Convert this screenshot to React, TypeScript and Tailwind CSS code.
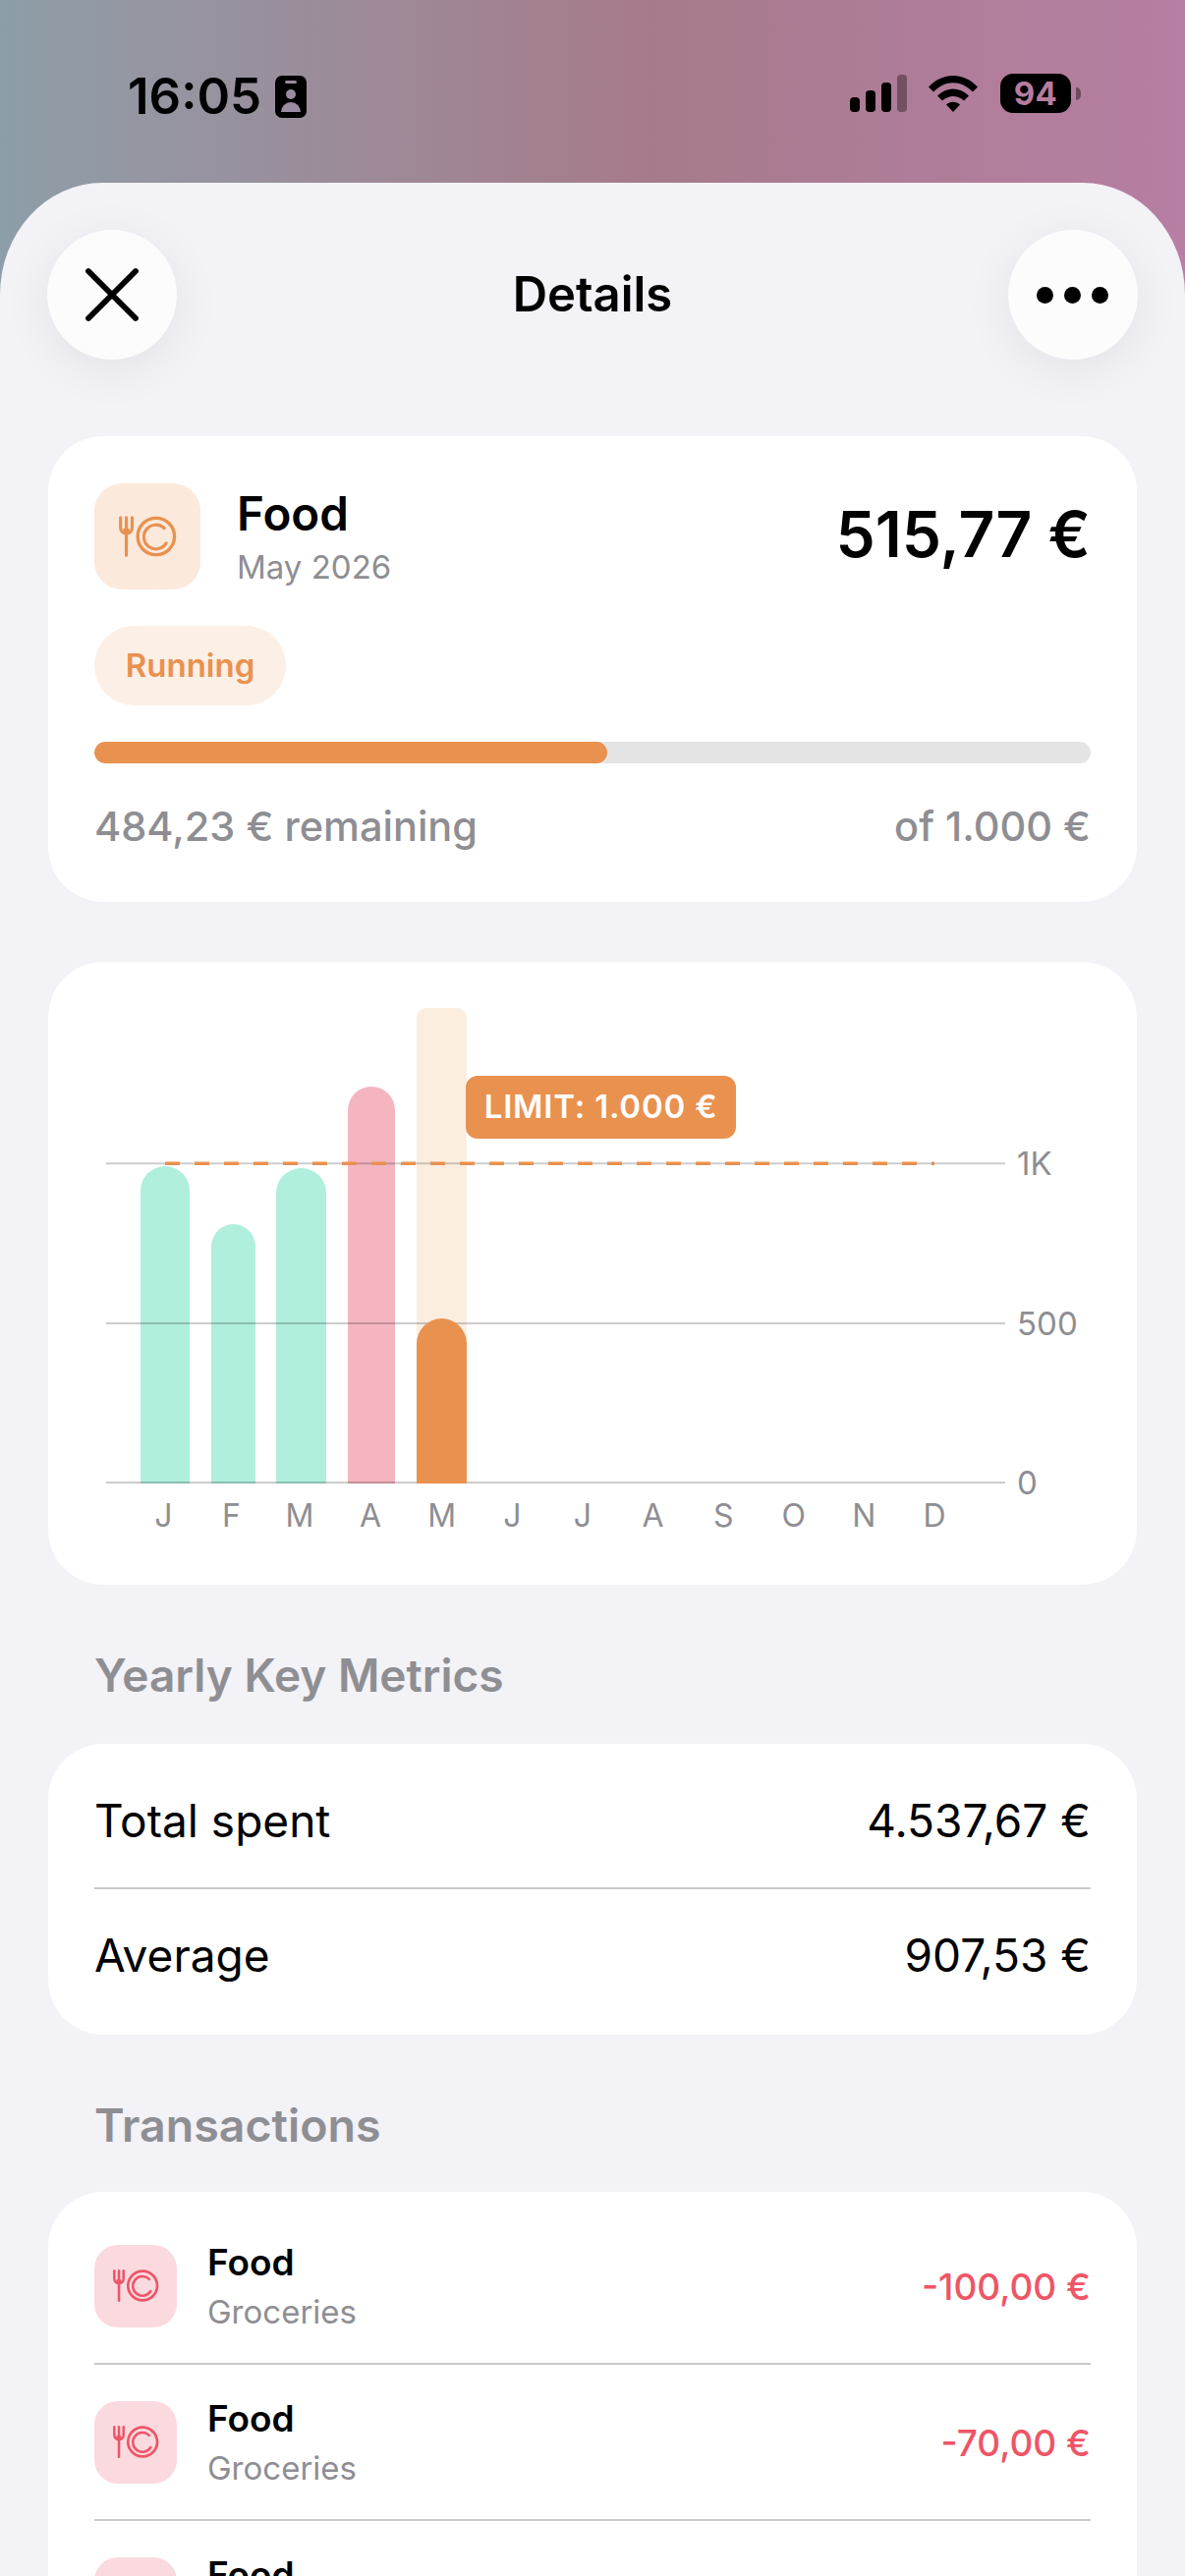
import React from 'react';
import { X } from 'lucide-react';

const FoodIcon = ({ className }: { className: string }) => (
  <svg viewBox="0 0 60 42" fill="none" stroke="currentColor" strokeLinecap="round" className={className}>
    <path d="M1.7 1.500V12a6 6 0 0 0 12 0V1.500M7.700 1.500V40.500" strokeWidth="3.2" />
    <path d="M5 13h5.500v4H5z" fill="currentColor" strokeWidth="0.5" />
    <circle cx="38.500" cy="21" r="19" strokeWidth="3.4" />
    <path d="M47 12.500A12.500 12.500 0 1 0 49 28" strokeWidth="3.2" />
  </svg>
);

const StatusIcons = () => (
  <div className="flex items-center">
    <svg width="62" height="38" viewBox="0 0 62 38" className="mr-[18px]">
      <rect x="0" y="23" width="10" height="15" rx="4" fill="#000" />
      <rect x="16" y="16" width="10" height="22" rx="4" fill="#000" />
      <rect x="32" y="8" width="10" height="30" rx="4" fill="#000" />
      <rect x="48" y="0" width="10" height="38" rx="4" fill="#000" fillOpacity="0.35" />
    </svg>
    <svg width="50" height="38" viewBox="0 0 50 38" className="mr-[23px]">
      <path d="M0 12.500C14-3 36-3 50 12.500l-5 5C33 5 17 5 5 17.500z" fill="#000" />
      <path d="M9 21.500c9.500-9.500 22.500-9.500 32 0l-5 5c-6.500-6-15.500-6-22 0z" fill="#000" />
      <path d="M18 30.500c4-3.800 10-3.800 14 0l-7 7.500z" fill="#000" />
    </svg>
    <div className="w-[72px] h-[40px] rounded-[13px] bg-black flex items-center justify-center text-[#b67d9e] text-[33px] leading-none font-bold tracking-[0.5px]">94</div>
    <div className="ml-[5px] w-[5px] h-[13px] rounded-r-full bg-black/40" />
  </div>
);

const Chart = () => (
  <div className="relative h-[531px]">
    <svg viewBox="0 0 1109 531" width="1109" height="531" className="block">
      <path d="M94 531V233a25 25 0 0 1 50 0V531z" fill="#b0eedd" />
      <path d="M166 531V290a22.500 23 0 0 1 45 0V531z" fill="#b0eedd" />
      <path d="M232 531V235a25.500 25 0 0 1 51 0V531z" fill="#b0eedd" />
      <path d="M305 531V151a24 24 0 0 1 48 0V531z" fill="#f4b5c0" />
      <path d="M375 531V57a10 10 0 0 1 10-10h31a10 10 0 0 1 10 10V531z" fill="#fbeee1" />
      <path d="M59 205.300H974M59 368H974M59 530H974" stroke="#000" strokeOpacity="0.2" strokeWidth="2" />
      <path d="M375 531V389a25.500 26 0 0 1 51 0V531z" fill="#e9914f" />
      <path d="M119 205.300H902" stroke="#e9914f" strokeWidth="3.5" strokeDasharray="15 15" />
    </svg>
    <div className="absolute left-[986px] top-[185px] text-[33px] leading-[40px] text-[#8e8e93]">1K</div>
    <div className="absolute left-[986px] top-[348px] text-[33px] leading-[40px] text-[#8e8e93]">500</div>
    <div className="absolute left-[986px] top-[510px] text-[33px] leading-[40px] text-[#8e8e93]">0</div>
    <div className="absolute left-[425px] top-[116px] w-[275px] h-[64px] rounded-[12px] bg-[#e9914f] flex items-center justify-center text-white text-[33px] font-semibold tracking-[0.8px]">
      LIMIT: 1.000 €
    </div>
  </div>
);

const Transaction = ({ amount }: { amount?: string }) => (
  <div className="h-[159px] flex items-center justify-between border-b-2 border-[#c9c9cd]">
    <div className="flex items-center">
      <div className="w-[84px] h-[84px] rounded-[24px] bg-[#fadadf] flex items-center justify-center text-[#ee5566]">
        <FoodIcon className="w-[47px] h-[33px]" />
      </div>
      <div className="ml-[31px]">
        <div className="text-[37px] leading-[44px] font-semibold text-black">Food</div>
        <div className="mt-[8px] text-[33px] leading-[40px] text-[#8e8e93]">Groceries</div>
      </div>
    </div>
    {amount && <div className="mt-[3px] text-[37px] font-medium text-[#ee5566]">{amount}</div>}
  </div>
);

export default function App() {
  return (
    <div className="h-[2622px] overflow-hidden bg-gradient-to-r from-[#8d9ea8] via-[#a67a8c] via-55% to-[#b77fa3] font-['Inter',sans-serif]">
      {/* Status bar */}
      <div className="h-[186px] pt-[75px] pl-[130px] pr-[106px] flex items-start justify-between text-black">
        <div className="flex items-center">
          <span className="text-[51px] leading-[46px] font-semibold">16:05</span>
          <div className="relative ml-[14px] w-[32px] h-[43px] rounded-[7px] bg-black">
            <div className="absolute left-[10px] top-[5px] w-[12px] h-[3px] rounded-full bg-[#9a8ca0]" />
            <div className="absolute left-[11px] top-[14px] w-[10px] h-[10px] rounded-full bg-[#9a8ca0]" />
            <div className="absolute left-[6px] top-[27px] w-[20px] h-[10px] rounded-t-full bg-[#9a8ca0]" />
          </div>
        </div>
        <StatusIcons />
      </div>

      {/* Sheet */}
      <div className="h-[2436px] rounded-tl-[104px_114px] rounded-tr-[104px_114px] bg-[#f2f2f7] px-[49px]">
        <div className="-mx-px pt-[48px] flex items-center justify-between">
          <button className="w-[132px] h-[132px] rounded-full bg-[#fcfcfd] flex items-center justify-center shadow-[0_10px_50px_rgba(0,0,0,0.07)]">
            <X className="w-[96px] h-[96px] text-black" strokeWidth={1.45} />
          </button>
          <div className="text-[49px] font-semibold text-black">Details</div>
          <button className="w-[132px] h-[132px] rounded-full bg-[#fcfcfd] flex items-center justify-center gap-[11px] shadow-[0_10px_50px_rgba(0,0,0,0.07)]">
            <span className="w-[17px] h-[17px] rounded-full bg-black" />
            <span className="w-[17px] h-[17px] rounded-full bg-black" />
            <span className="w-[17px] h-[17px] rounded-full bg-black" />
          </button>
        </div>

        {/* Summary */}
        <div className="mt-[78px] h-[474px] rounded-[56px] bg-white px-[47px] pt-[48px]">
          <div className="flex justify-between">
            <div className="flex">
              <div className="w-[108px] h-[108px] rounded-[28px] bg-[#fbe9dc] flex items-center justify-center text-[#e9914f]">
                <FoodIcon className="w-[59px] h-[42px]" />
              </div>
              <div className="ml-[37px]">
                <div className="mt-[3px] text-[47.5px] leading-[56px] font-semibold text-black">Food</div>
                <div className="mt-[5px] text-[33px] leading-[42px] text-[#8e8e93]">May 2026</div>
              </div>
            </div>
            <div className="mt-[16px] text-[64px] leading-[72px] font-semibold text-black">515,77 €</div>
          </div>
          <div className="mt-[37px] w-[195px] h-[81px] rounded-full bg-[#fcefe5] flex items-center justify-center text-[33px] font-semibold text-[#e9914f]">
            Running
          </div>
          <div className="mt-[37px] h-[22px] rounded-full bg-[#e4e4e4] overflow-hidden">
            <div className="h-full w-[522px] rounded-full bg-[#e9914f]" />
          </div>
          <div className="mt-[40px] flex justify-between text-[41.500px] leading-[48px] font-medium text-[#8e8e93]">
            <span>484,23 € remaining</span>
            <span>of 1.000 €</span>
          </div>
        </div>

        {/* Chart */}
        <div className="mt-[61px] h-[634px] rounded-[56px] bg-white">
          <Chart />
          <div className="mt-[13px] ml-[83px] grid grid-cols-[69px_69px_70px_74px_repeat(8,71.6px)] text-center text-[32px] leading-[40px] text-[#8e8e93]">
            <span>J</span><span>F</span><span>M</span><span>A</span><span>M</span><span>J</span>
            <span>J</span><span>A</span><span>S</span><span>O</span><span>N</span><span>D</span>
          </div>
        </div>

        {/* Key metrics */}
        <div className="mt-[62px] pl-[47px] text-[46px] leading-[60px] font-semibold text-[#8e8e93]">Yearly Key Metrics</div>
        <div className="mt-[40px] h-[296px] rounded-[56px] bg-white px-[47px] text-[46px] text-black">
          <div className="h-[148px] pt-[10px] flex items-center justify-between border-b-2 border-[#c9c9cd]">
            <span>Total spent</span>
            <span>4.537,67 €</span>
          </div>
          <div className="h-[134px] flex items-center justify-between">
            <span>Average</span>
            <span>907,53 €</span>
          </div>
        </div>

        {/* Transactions */}
        <div className="mt-[62px] pl-[47px] text-[46.500px] leading-[60px] font-semibold text-[#8e8e93]">Transactions</div>
        <div className="mt-[38px] rounded-[56px] bg-white px-[47px] pt-[17px]">
          <Transaction amount="-100,00 €" />
          <Transaction amount="-70,00 €" />
          <Transaction />
        </div>
      </div>
    </div>
  );
}
